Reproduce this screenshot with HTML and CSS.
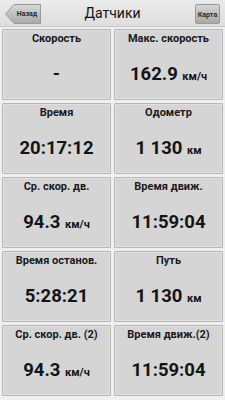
FILE: index.html
```html
<!DOCTYPE html>
<html>
<head>
<meta charset="utf-8">
<link rel="stylesheet" href="styles.css">
</head>
<body>
<div class="app">
  <div class="header">
    <div class="back"><svg class="back-shape" width="36" height="20" viewBox="0 0 36 20"><defs><linearGradient id="g1" x1="0" y1="0" x2="0" y2="1"><stop offset="0" stop-color="#d8d8d8"/><stop offset="1" stop-color="#a9a9a9"/></linearGradient></defs><path d="M0.5 10 L9 0.5 H35.5 V19.5 H9 Z" fill="url(#g1)" stroke="#9a9a9a"/></svg><span class="back-text">Назад</span></div>
    <div class="title">Датчики</div>
    <div class="map">Карта</div>
  </div>
  <div class="grid">
    <div class="cell"><div class="label">Скорость</div><div class="value">-</div></div>
    <div class="cell"><div class="label">Макс. скорость</div><div class="value">162.9 <span class="unit">км/ч</span></div></div>
    <div class="cell"><div class="label">Время</div><div class="value">20:17:12</div></div>
    <div class="cell"><div class="label">Одометр</div><div class="value">1 130 <span class="unit">км</span></div></div>
    <div class="cell"><div class="label">Ср. скор. дв.</div><div class="value">94.3 <span class="unit">км/ч</span></div></div>
    <div class="cell"><div class="label">Время движ.</div><div class="value">11:59:04</div></div>
    <div class="cell"><div class="label">Время останов.</div><div class="value">5:28:21</div></div>
    <div class="cell"><div class="label">Путь</div><div class="value">1 130 <span class="unit">км</span></div></div>
    <div class="cell"><div class="label">Ср. скор. дв. (2)</div><div class="value">94.3 <span class="unit">км/ч</span></div></div>
    <div class="cell"><div class="label">Время движ.(2)</div><div class="value">11:59:04</div></div>
  </div>
</div>
</body>
</html>
```
FILE: styles.css
```css
html, body { margin: 0; padding: 0; }
body {
  width: 225px;
  height: 400px;
  overflow: hidden;
  background: #efefef;
  font-family: Roboto, "Liberation Sans", sans-serif;
  color: #1a1a1a;
}
.app { display: flex; flex-direction: column; height: 400px; }
.header {
  height: 27px;
  flex: none;
  display: flex;
  align-items: center;
  position: relative;
  background: linear-gradient(#ebebeb, #dedede);
  border-bottom: 1px solid #c8c8c8;
  box-sizing: border-box;
}
.back {
  position: absolute;
  left: 5px;
  top: 4px;
  width: 36px;
  height: 20px;
}
.back-shape { display: block; }
.back-text {
  position: absolute;
  left: 9px;
  top: 0;
  width: 26px;
  height: 20px;
  line-height: 20px;
  text-align: center;
  font-size: 7px;
  font-weight: bold;
  color: #2a2a2a;
}
.title {
  flex: 1;
  text-align: center;
  font-size: 14px;
  color: #111;
}
.map {
  position: absolute;
  right: 5px;
  top: 4px;
  width: 25px;
  height: 20px;
  line-height: 20px;
  text-align: center;
  font-size: 7px;
  font-weight: bold;
  color: #2a2a2a;
  background: linear-gradient(#d6d6d6, #a8a8a8);
  border: 1px solid #9a9a9a;
  border-radius: 2px;
  box-sizing: border-box;
}
.grid {
  display: grid;
  grid-template-columns: 1fr 1fr;
  grid-auto-rows: 71px;
  gap: 3px;
  padding: 2px 2px 0 2px;
}
.cell {
  background: #d5d5d5;
  border: 1px solid #b8b8b8;
  border-radius: 1px;
  box-shadow: inset 0 0 0 1px #e0e0e0;
  display: flex;
  flex-direction: column;
  align-items: center;
  box-sizing: border-box;
}
.label {
  margin-top: 2px;
  font-size: 11px;
  font-weight: bold;
  color: #1a1a1a;
  white-space: nowrap;
}
.value {
  margin-top: 18px;
  font-size: 18.5px;
  font-weight: bold;
  color: #141414;
  white-space: nowrap;
}
.unit { font-size: 11px; }
```
